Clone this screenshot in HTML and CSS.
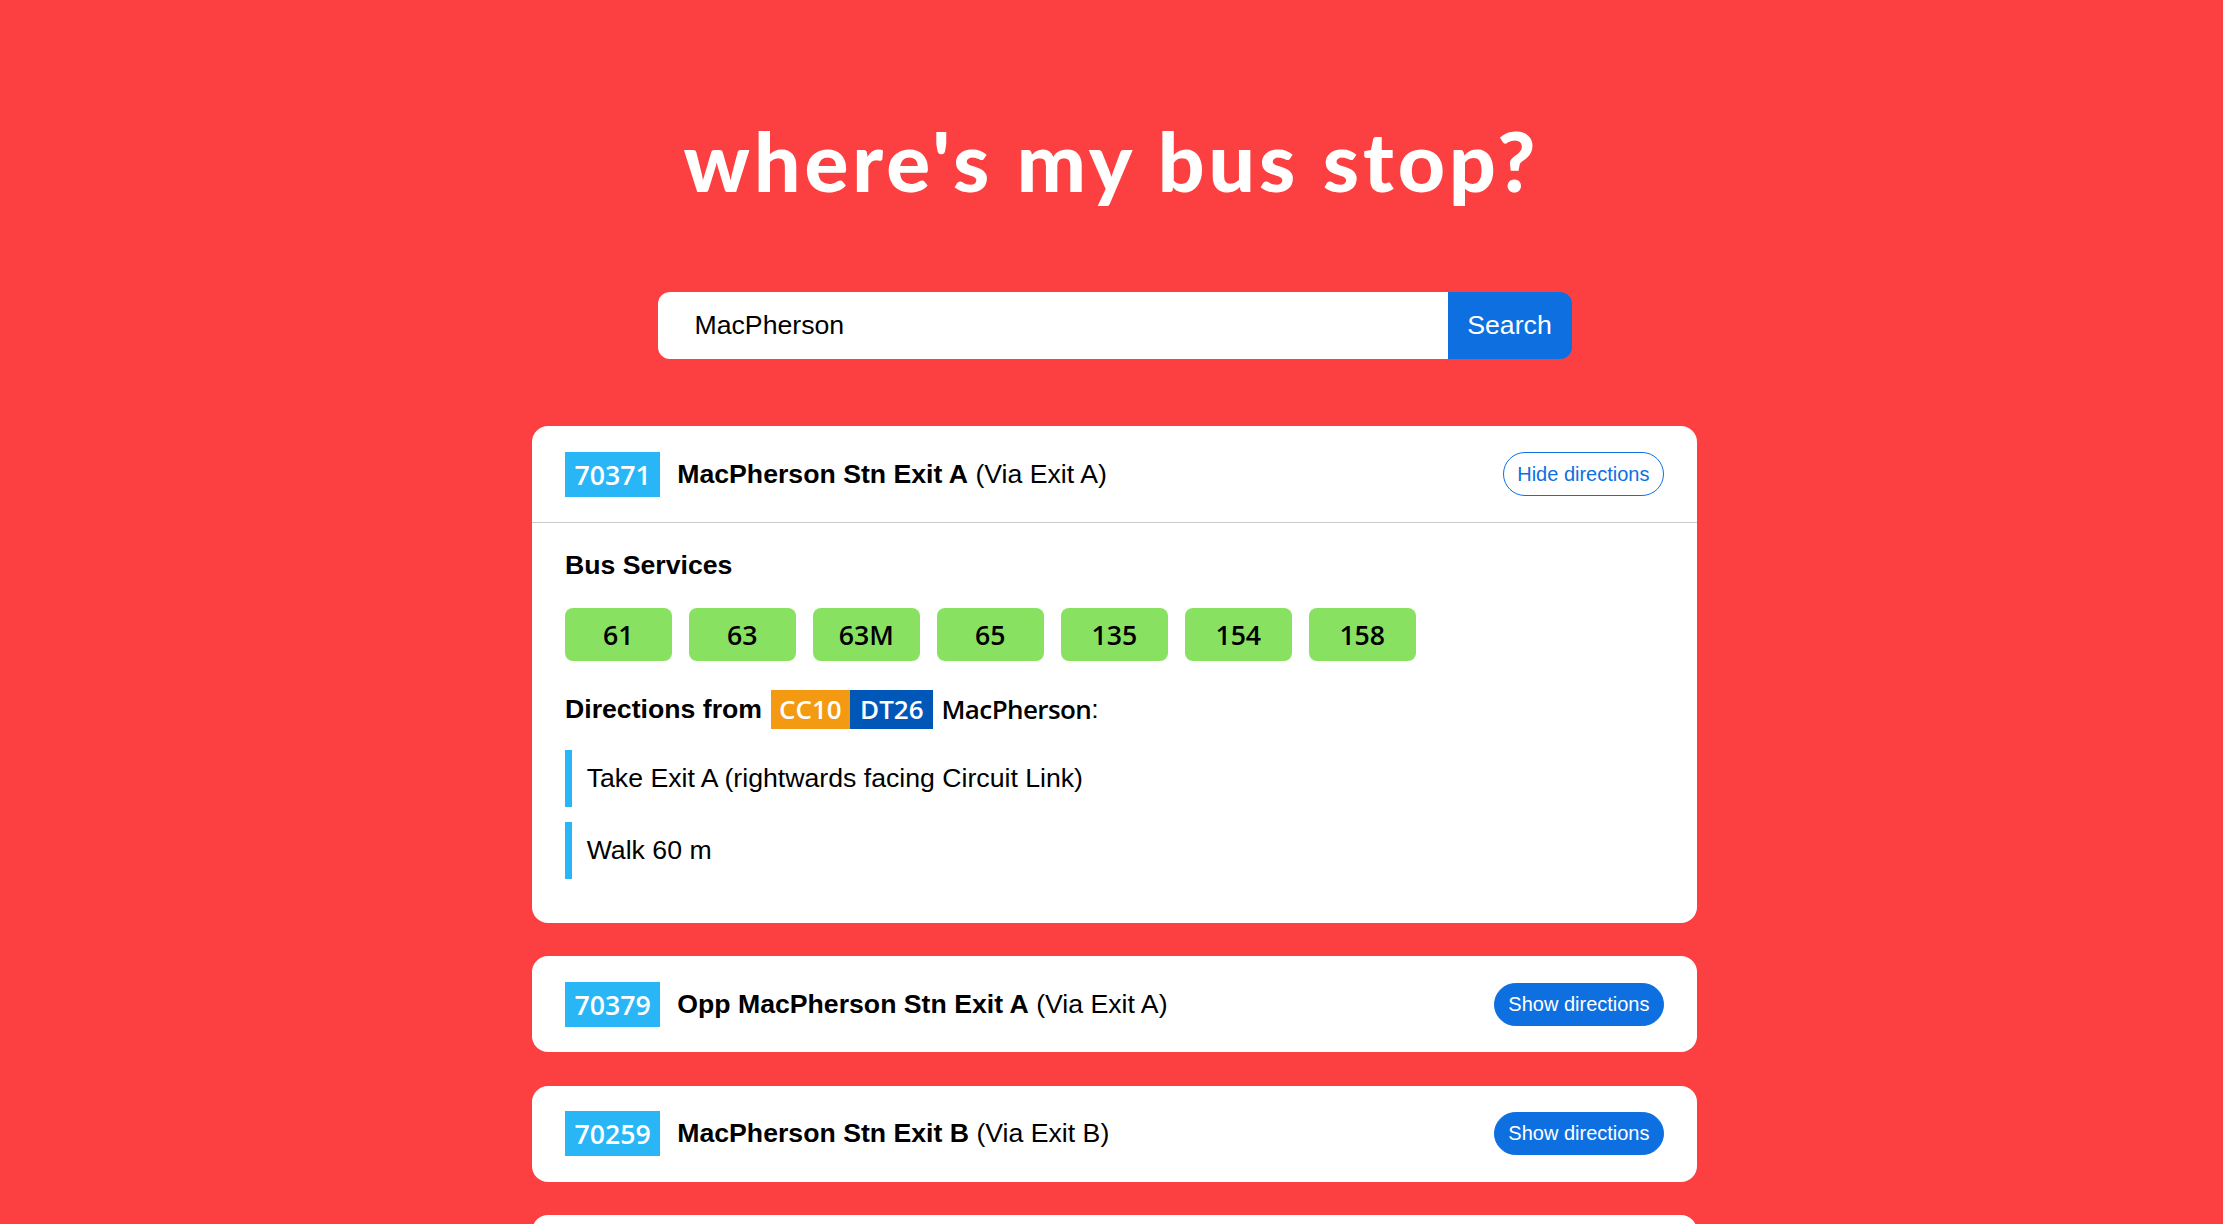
FILE: index.html
```html
<!DOCTYPE html>
<html lang="en">
<head>
<meta charset="utf-8">
<title>where's my bus stop?</title>
<link rel="stylesheet" href="styles.css">
</head>
<body>
<header class="hero">
  <h1 class="title">where's my bus stop?</h1>
</header>
<main class="content">
  <form class="search" onsubmit="return false">
    <input class="search-input" type="text" value="MacPherson">
    <button class="search-btn" type="submit">Search</button>
  </form>

  <ul class="results">
    <li class="card">
      <div class="card-head open">
        <div class="stop">
          <span class="stop-code">70371</span>
          <span class="stop-name"><b>MacPherson Stn Exit A</b> (Via Exit A)</span>
        </div>
        <button class="dir-btn outline">Hide directions</button>
      </div>
      <div class="card-body">
        <h2 class="section-title">Bus Services</h2>
        <div class="services">
          <span class="svc">61</span>
          <span class="svc">63</span>
          <span class="svc">63M</span>
          <span class="svc">65</span>
          <span class="svc">135</span>
          <span class="svc">154</span>
          <span class="svc">158</span>
        </div>
        <div class="dir-title">
          <span class="dir-label">Directions from</span>
          <span class="codes"><span class="code cc">CC10</span><span class="code dt">DT26</span></span>
          <span class="station">MacPherson</span><span class="colon">:</span>
        </div>
        <ul class="steps">
          <li class="step">Take Exit A (rightwards facing Circuit Link)</li>
          <li class="step">Walk 60 m</li>
        </ul>
      </div>
    </li>

    <li class="card">
      <div class="card-head">
        <div class="stop">
          <span class="stop-code">70379</span>
          <span class="stop-name"><b>Opp MacPherson Stn Exit A</b> (Via Exit A)</span>
        </div>
        <button class="dir-btn">Show directions</button>
      </div>
    </li>

    <li class="card">
      <div class="card-head">
        <div class="stop">
          <span class="stop-code">70259</span>
          <span class="stop-name"><b>MacPherson Stn Exit B</b> (Via Exit B)</span>
        </div>
        <button class="dir-btn">Show directions</button>
      </div>
    </li>

    <li class="card">
      <div class="card-head">
        <div class="stop">
          <span class="stop-code">70251</span>
          <span class="stop-name"><b>Opp MacPherson Stn Exit B</b> (Via Exit B)</span>
        </div>
        <button class="dir-btn">Show directions</button>
      </div>
    </li>
  </ul>
</main>
</body>
</html>
```

FILE: styles.css
```css
* { box-sizing: border-box; }

html, body {
  margin: 0;
  padding: 0;
}

body {
  background: #fc4041;
  font-family: "Liberation Sans", Arial, sans-serif;
  font-size: 26.67px;
  color: #000;
}

.hero {
  padding-top: 113px;
  text-align: center;
}

.title {
  margin: 0;
  font-family: "Lato", "Liberation Sans", sans-serif;
  font-weight: 900;
  font-size: 82px;
  letter-spacing: 4px;
  line-height: 94px;
  color: #fff;
}

.content {
  display: flex;
  flex-direction: column;
  align-items: center;
  padding-left: 6px;
  padding-bottom: 40px;
}

.search {
  display: flex;
  width: 914px;
  height: 67px;
  margin-top: 85px;
}

.search-input {
  flex: 1;
  min-width: 0;
  height: 100%;
  border: none;
  border-radius: 12px 0 0 12px;
  padding: 0 0 0 37px;
  font-family: "Liberation Sans", Arial, sans-serif;
  font-size: 26.67px;
  color: #000;
  background: #fff;
  outline: none;
}

.search-btn {
  width: 124px;
  height: 100%;
  border: none;
  border-radius: 0 12px 12px 0;
  background: #0e6fe1;
  color: #fff;
  font-family: "Liberation Sans", Arial, sans-serif;
  font-size: 26.67px;
  padding: 0;
}

.results {
  list-style: none;
  margin: 67px 0 0;
  padding: 0;
  width: 1165px;
  display: flex;
  flex-direction: column;
  gap: 33.3px;
}

.card {
  background: #fff;
  border-radius: 16px;
  overflow: hidden;
}

.card-head {
  display: flex;
  align-items: center;
  justify-content: space-between;
  padding: 25.5px 33px;
}

.card-head.open {
  border-bottom: 1px solid #cbcbcb;
}

.stop {
  display: flex;
  align-items: center;
  gap: 17px;
}

.stop-code {
  display: flex;
  align-items: center;
  justify-content: center;
  height: 45px;
  padding: 0 9.5px;
  background: #29b6f6;
  color: #fff;
  font-family: "Open Sans", "Noto Sans", sans-serif;
  font-weight: 600;
  font-size: 26.67px;
}

.stop-name {
  font-size: 26.67px;
  white-space: nowrap;
}

.stop-name b {
  font-weight: 700;
}

.dir-btn {
  height: 43px;
  padding: 0 13.5px;
  border: 1px solid #0e6fe1;
  border-radius: 22px;
  background: #0e6fe1;
  color: #fff;
  font-family: "Liberation Sans", Arial, sans-serif;
  font-size: 20px;
}

.dir-btn.outline {
  height: 44px;
  background: #fff;
  color: #0e6fe1;
}

.card-body {
  padding: 27px 33px 44.5px;
}

.section-title {
  margin: 0;
  font-size: 26.67px;
  font-weight: 700;
  line-height: 30.6px;
}

.services {
  display: flex;
  gap: 17.3px;
  margin-top: 27px;
}

.svc {
  display: flex;
  align-items: center;
  justify-content: center;
  width: 106.7px;
  height: 53.7px;
  border-radius: 8px;
  background: #89e162;
  font-family: "Open Sans", "Noto Sans", sans-serif;
  font-weight: 600;
  font-size: 26.67px;
}

.dir-title {
  display: flex;
  align-items: center;
  margin-top: 28.3px;
  height: 39.7px;
}

.dir-label {
  font-weight: 700;
  margin-right: 8.5px;
}

.codes {
  display: flex;
  height: 39.7px;
  margin-right: 8px;
}

.code {
  display: flex;
  align-items: center;
  justify-content: center;
  padding: 0 9px;
  color: #fff;
  font-family: "Open Sans", "Noto Sans", sans-serif;
  font-weight: 600;
  font-size: 26px;
}

.code.cc { background: #f39a12; width: 79.7px; }
.code.dt { background: #0057b8; width: 83.3px; }

.station {
  font-family: "Open Sans", "Noto Sans", sans-serif;
  font-weight: 600;
  font-size: 26px;
  letter-spacing: -0.6px;
}

.colon {
  font-weight: 400;
}

.steps {
  list-style: none;
  margin: 21px 0 0;
  padding: 0;
  display: flex;
  flex-direction: column;
  gap: 15px;
}

.step {
  display: flex;
  align-items: center;
  height: 56.7px;
  border-left: 7.5px solid #29b6f6;
  padding-left: 14.7px;
  font-size: 26.67px;
}
```
